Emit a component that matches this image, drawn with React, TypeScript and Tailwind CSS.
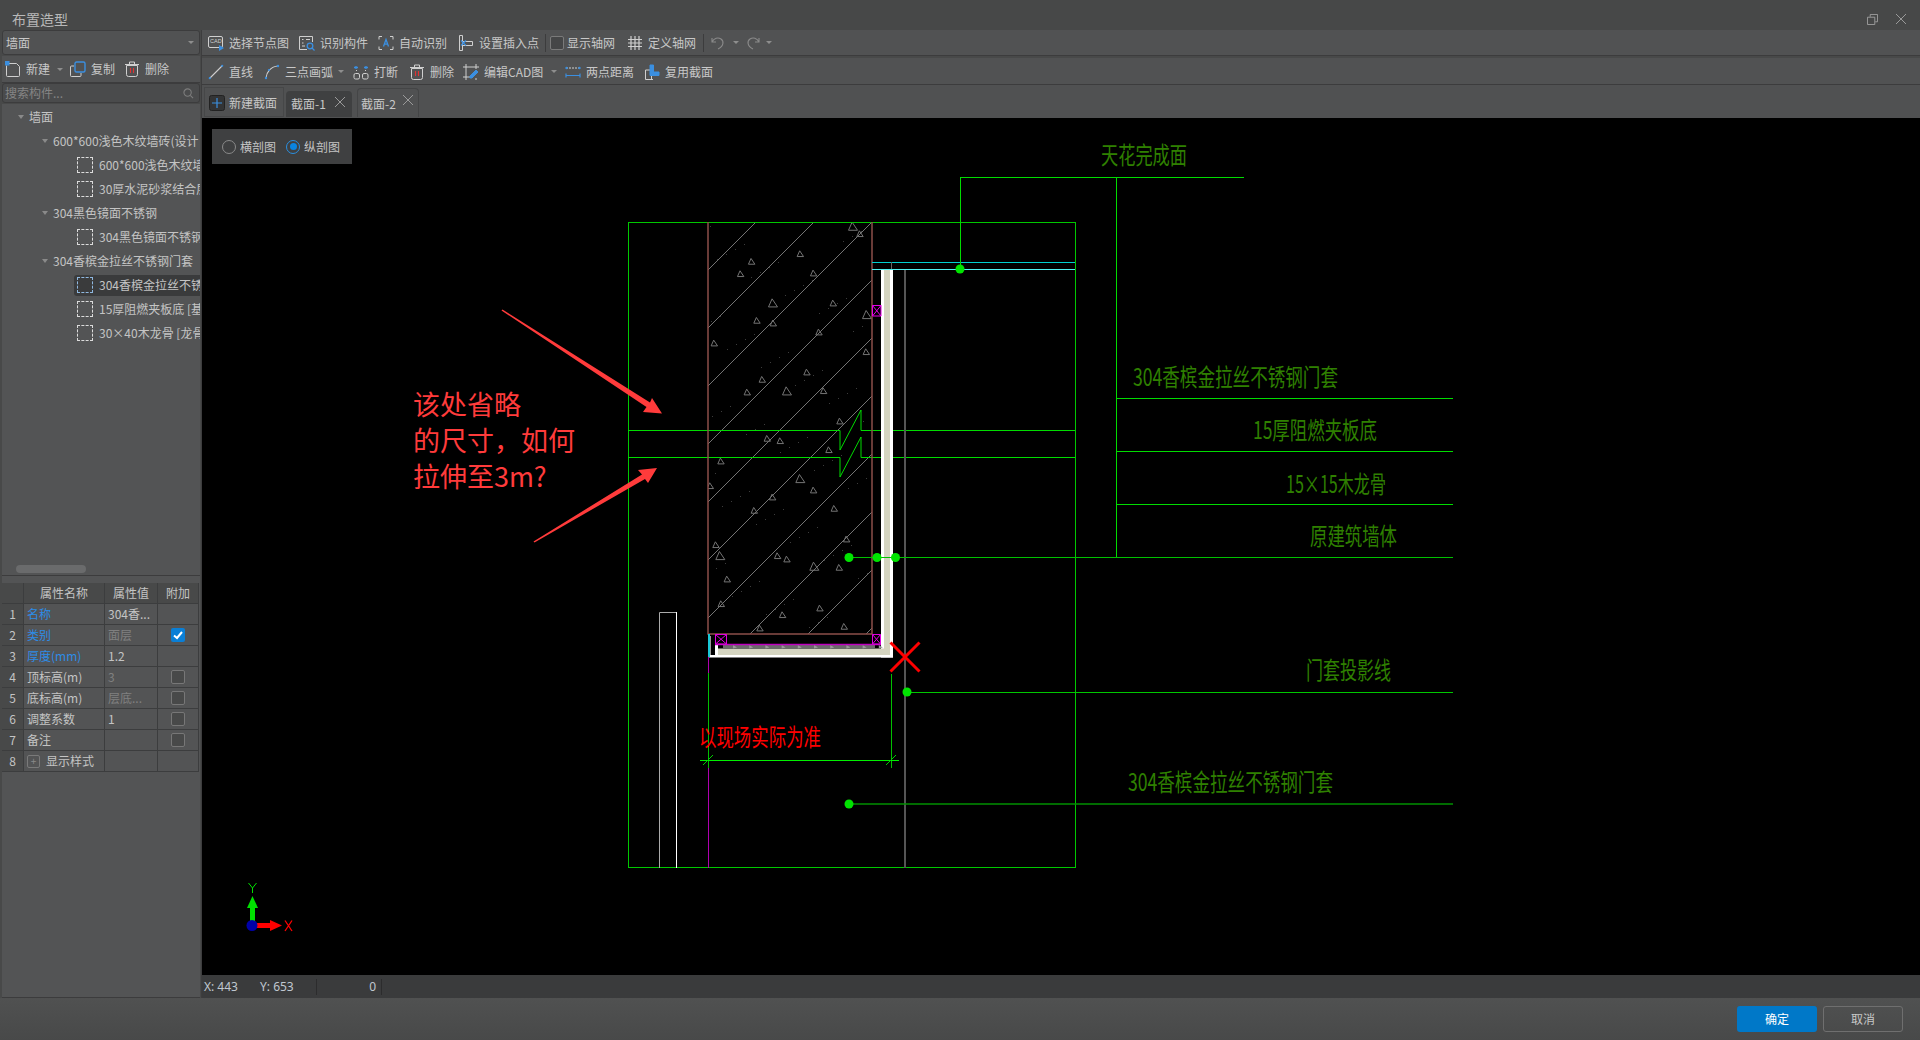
import React from "react";

const FONT = { fontFamily: '"Noto Sans CJK SC", "Noto Sans", sans-serif' };
const LATIN = '"Noto Sans", "Noto Sans CJK SC", sans-serif';

function I({ children, className = "" }: { children: React.ReactNode; className?: string }) {
  return (
    <svg viewBox="0 0 16 16" fill="none" stroke="#cfcfcf" strokeWidth="1" className={"w-4 h-4 shrink-0 " + className}>
      {children}
    </svg>
  );
}
const B = "#3b8fe0";
const IconCad = () => (
  <I>
    <rect x="0.5" y="1.5" width="14" height="11" rx="1.5" />
    <text x="2" y="8" fontSize="5.5" fill="#cfcfcf" stroke="none" fontFamily="Liberation Sans">CAD</text>
    <path d="M11 10l5 3-5 3z" fill={B} stroke="none" />
  </I>
);
const IconRecog = () => (
  <I>
    <path d="M13.5 7V1.5h-13v13H8" />
    <path d="M3 4.5h1.5M7 4.5h4M3 8h1.5M3 11h3" />
    <circle cx="11" cy="11" r="2.8" stroke={B} strokeWidth="1.3" />
    <path d="M13 13l2.5 2.5" stroke={B} strokeWidth="1.3" />
  </I>
);
const IconAuto = () => (
  <I>
    <path d="M1 4.5V1.5h3M12 1.5h3v3M1 11.5v3h3M15 11.5v3h-3" />
    <path d="M5.5 11.5L8 4.5l2.5 7M6.4 9.2h3.2" stroke={B} strokeWidth="1.3" />
  </I>
);
const IconInsert = () => (
  <I>
    <path d="M1.5 0.5h3v15h-3z" />
    <path d="M4.5 6.5h10v4h-10" />
    <path d="M3 5.5l5 5M8 5.5l-5 5" stroke={B} strokeWidth="1.2" />
  </I>
);
const IconGrid = () => (
  <I>
    <path d="M4 1v14M8 1v14M12 1v14M1 4.5h14M1 8h14M1 11.5h14" strokeWidth="1.2" />
  </I>
);
const IconLine = () => (
  <I>
    <path d="M2 14L14 2" strokeWidth="1.1" />
    <circle cx="1.8" cy="14.2" r="1.1" fill={B} stroke="none" />
    <circle cx="14.2" cy="1.8" r="1.1" fill={B} stroke="none" />
  </I>
);
const IconArc = () => (
  <I>
    <path d="M2 14C2.5 8 7 2.5 14 2" strokeWidth="1.1" />
    <circle cx="2" cy="14" r="1.2" fill={B} stroke="none" />
    <circle cx="5" cy="6" r="1.1" fill={B} stroke="none" />
    <circle cx="14" cy="2" r="1.2" fill={B} stroke="none" />
  </I>
);
const IconBreak = () => (
  <I>
    <rect x="1" y="9.5" width="5.5" height="5.5" rx="1.5" />
    <rect x="9.5" y="9.5" width="5.5" height="5.5" rx="1.5" />
    <path d="M1 3.5h4M3 2v3M11 3.5h4M13 2v3" stroke={B} strokeWidth="1.3" />
    <path d="M3.5 7V6M12.5 7V6" />
  </I>
);
const IconTrash = () => (
  <I>
    <path d="M2.5 4.5h11v9a2 2 0 0 1-2 2h-7a2 2 0 0 1-2-2z" />
    <path d="M1 3.5h14M5.5 3V1h5v2" />
    <path d="M6.5 7v5M9.5 7v5" stroke="#e03434" strokeWidth="1.1" />
  </I>
);
const IconEditCad = () => (
  <I>
    <path d="M3 0v16M0 3h16M13 0v5M0 13h8M13 14v2" strokeWidth="1" />
    <path d="M7 12l6-6 2 2-6 6H7z" fill={B} stroke={B} />
  </I>
);
const IconDist = () => (
  <I>
    <path d="M1 4h14" stroke="#cfcfcf" strokeDasharray="2 1" />
    <path d="M1 11.5h14M1 9.5v4M15 9.5v4" stroke={B} strokeWidth="1.2" />
    <circle cx="1.5" cy="4" r="1.2" fill={B} stroke="none" />
    <circle cx="14.5" cy="4" r="1.2" fill={B} stroke="none" />
  </I>
);
const IconReuse = () => (
  <I>
    <path d="M9 15.5H1.5V6h6v9.5" />
    <path d="M6 1h3.5v7H15v3.5H6z" fill={B} stroke={B} />
  </I>
);
const IconNew = () => (
  <I>
    <path d="M3.5 2.5h8l3 3v9a1 1 0 0 1-1 1h-11a1 1 0 0 1-1-1v-10" />
    <rect x="0" y="0" width="4.5" height="4.5" fill={B} stroke="none" />
  </I>
);
const IconCopy = () => (
  <I>
    <path d="M4 5H1.5a1 1 0 0 0-1 1v8.5a1 1 0 0 0 1 1H10a1 1 0 0 0 1-1V12" />
    <rect x="5" y="1" width="10" height="10" rx="1.5" stroke={B} strokeWidth="1.4" />
  </I>
);
const IconTabAdd = () => (
  <svg viewBox="0 0 16 16" fill="none" className="w-4 h-4 shrink-0">
    <rect x="0.5" y="0.5" width="15" height="15" rx="2" fill="#333435" stroke="#222" />
    <path d="M8 3v10M3 8h10" stroke={B} strokeWidth="1.2" />
  </svg>
);

function Caret({ className = "" }: { className?: string }) {
  return <span className={"w-0 h-0 shrink-0 border-x-[3px] border-x-transparent border-t-[3px] border-t-[#8e8e8e] " + className} />;
}

function Tool({ icon, label, className = "" }: { icon: React.ReactNode; label: string; className?: string }) {
  return (
    <div className={"flex items-center shrink-0 text-[12px] text-[#c8c8c8] " + className}>
      {icon}
      <span className="ml-[5px] whitespace-nowrap">{label}</span>
    </div>
  );
}

function Row({ indent, arrow, icon, text, sel }: { indent: string; arrow?: boolean; icon?: boolean; text: string; sel?: boolean }) {
  return (
    <div className={"h-6 flex items-center whitespace-nowrap overflow-hidden " + indent}>
      {arrow && <span className="w-0 h-0 mr-[5px] border-x-[3.5px] border-x-transparent border-t-[4px] border-t-[#8a8a8a]" />}
      {icon ? (
        <div className={"flex items-center flex-1 h-[21px] pl-[3px] rounded-l-[3px] overflow-hidden " + (sel ? "bg-[#3a3b3c]" : "")}>
          <span className={"w-4 h-4 shrink-0 border border-dashed mr-[6px] " + (sel ? "border-[#8fb8e0]" : "border-[#dcdcdc]")} />
          <span className="text-[12px] text-[#c4c4c4]">{text}</span>
        </div>
      ) : (
        <span className="text-[12px] text-[#c4c4c4]">{text}</span>
      )}
    </div>
  );
}

const tree = [
  { indent: "pl-[16px]", arrow: true, text: "墙面" },
  { indent: "pl-[40px]", arrow: true, text: "600*600浅色木纹墙砖(设计" },
  { indent: "pl-[72px]", icon: true, text: "600*600浅色木纹墙砖" },
  { indent: "pl-[72px]", icon: true, text: "30厚水泥砂浆结合层" },
  { indent: "pl-[40px]", arrow: true, text: "304黑色镜面不锈钢" },
  { indent: "pl-[72px]", icon: true, text: "304黑色镜面不锈钢板" },
  { indent: "pl-[40px]", arrow: true, text: "304香槟金拉丝不锈钢门套" },
  { indent: "pl-[72px]", icon: true, text: "304香槟金拉丝不锈钢板", sel: true },
  { indent: "pl-[72px]", icon: true, text: "15厚阻燃夹板底 [基层]" },
  { indent: "pl-[72px]", icon: true, text: "30×40木龙骨 [龙骨]" },
];

function Check({ on }: { on?: boolean }) {
  return on ? (
    <span className="w-[14px] h-[14px] rounded-[2px] bg-[#0a7fd6] flex items-center justify-center">
      <svg viewBox="0 0 12 12" className="w-3 h-3" fill="none" stroke="#fff" strokeWidth="2"><path d="M2 6.5l3 2.5 5-6" /></svg>
    </span>
  ) : (
    <span className="w-[14px] h-[14px] rounded-[2px] border border-[#777] bg-[#484949]" />
  );
}

const props: { n: number; name: string; blue?: boolean; val: string; dim?: boolean; chk?: "on" | "off"; plus?: boolean }[] = [
  { n: 1, name: "名称", blue: true, val: "304香..." },
  { n: 2, name: "类别", blue: true, val: "面层", dim: true, chk: "on" },
  { n: 3, name: "厚度(mm)", blue: true, val: "1.2" },
  { n: 4, name: "顶标高(m)", val: "3", dim: true, chk: "off" },
  { n: 5, name: "底标高(m)", val: "层底...", dim: true, chk: "off" },
  { n: 6, name: "调整系数", val: "1", chk: "off" },
  { n: 7, name: "备注", val: "", chk: "off" },
  { n: 8, name: "显示样式", val: "", plus: true },
];

function PropTable() {
  const cell = "border-r border-b border-[#3c3d3e] flex items-center h-[21px] text-[12px]";
  return (
    <div className="grid grid-cols-[22px_81px_53px_41px] w-[197px] mt-[7px]">
      <div className={cell + " bg-[#484949]"} />
      <div className={cell + " bg-[#484949] justify-center text-[#c4c4c4]"}>属性名称</div>
      <div className={cell + " bg-[#484949] justify-center text-[#c4c4c4]"}>属性值</div>
      <div className={cell + " bg-[#484949] justify-center text-[#c4c4c4]"}>附加</div>
      {props.map((p) => (
        <React.Fragment key={p.n}>
          <div className={cell + " bg-[#484949] justify-center text-[#c4c4c4]"}>{p.n}</div>
          <div className={cell + " pl-[3px] " + (p.blue ? "text-[#2d8ce6]" : "text-[#c4c4c4]")}>
            {p.plus && (
              <span className="w-[13px] h-[13px] mr-[6px] rounded-[2px] border border-[#7a7a7a] flex items-center justify-center text-[10px] leading-none text-[#8a8a8a]">+</span>
            )}
            {p.name}
          </div>
          <div className={cell + " pl-[3px] " + (p.dim ? "text-[#808080]" : "text-[#c4c4c4]")}>{p.val}</div>
          <div className={cell + " justify-center"}>{p.chk && <Check on={p.chk === "on"} />}</div>
        </React.Fragment>
      ))}
    </div>
  );
}

const tris: [number, number, number][] = [
  ...([
    [699, 50, 1], [720, 72, 0], [541, 132, 0], [395, 155, 0], [362, 192, 0], [581, 190, 0], [459, 280, 1], [640, 280, 0], [741, 315, 1],
    [411, 332, 0], [460, 340, 0], [597, 367, 0], [283, 400, 0], [739, 426, 0], [561, 487, 0], [427, 509, 0], [382, 547, 0], [501, 544, 1],
    [611, 543, 0], [660, 634, 0], [442, 686, 0], [481, 693, 0], [627, 720, 0], [303, 754, 0], [271, 828, 0], [541, 807, 1], [581, 841, 0], [458, 862, 0],
  ] as number[][]).map((t) => [620 + t[0] / 3, 210 + t[1] / 3, t[2]] as [number, number, number]),
  ...([
    [403, 32, 0], [643, 26, 0], [680, 118, 0], [288, 135, 0], [301, 168, 1], [473, 168, 0], [501, 178, 0], [658, 203, 0], [583, 200, 1],
    [322, 238, 0], [304, 312, 0], [600, 325, 0], [488, 345, 0], [420, 385, 0], [673, 380, 0],
  ] as number[][]).map((t) => [620 + t[0] / 3, 500 + t[1] / 3, t[2]] as [number, number, number]),
];

const specks: [number, number][] = Array.from({ length: 90 }, (_, i) => [
  710 + ((i * 97) % 160),
  226 + ((i * 211) % 404),
]);

const GREEN_TXT = "#2f8000";
function Label({ x, y, w, children }: { x: number; y: number; w: number; children: string }) {
  return (
    <text x={x} y={y} fontSize="24" fill={GREEN_TXT} textLength={w} lengthAdjust="spacingAndGlyphs" style={FONT}>
      {children}
    </text>
  );
}

function Drawing() {
  const hatch = Array.from({ length: 10 }, (_, k) => 978 + 58 * k);
  return (
    <svg viewBox="202 118 1718 857" className="block w-full h-full" fill="none">
      <defs>
        <clipPath id="wall"><rect x="708" y="222" width="164" height="412" /></clipPath>
      </defs>
      {/* hatch */}
      <g clipPath="url(#wall)" stroke="#747474" strokeWidth="1">
        {hatch.map((c) => (
          <line key={c} x1="708" y1={c - 708} x2="872" y2={c - 872} />
        ))}
        {tris.map((t, i) => {
          const s = t[2] ? 4.5 : 3.2;
          return <path key={i} d={`M${t[0] - s * 0.2} ${t[1] - s} L${t[0] + s} ${t[1] + s * 0.8} L${t[0] - s} ${t[1] + s * 0.8} Z`} />;
        })}
      </g>
      <g fill="#3c3c3c">
        {specks.map((p, i) => (
          <rect key={i} x={p[0]} y={p[1]} width="1" height="1" />
        ))}
      </g>
      {/* frame */}
      <rect x="628.5" y="222.5" width="447" height="645" stroke="#00c800" />
      <path d="M628 430.5H840V450L861 410V430.5H1075M628 457.5H840V477L861 437V457.5H1075" stroke="#00dc00" />
      {/* wall */}
      <path d="M708 222V634H872V222" stroke="#8c4f49" strokeWidth="1.5" />
      {/* grey lines */}
      <line x1="905" y1="270" x2="905" y2="868" stroke="#555" strokeWidth="2" />
      <path d="M659.5 868V612.5H676" stroke="#aaa" />
      <path d="M676.5 612V868" stroke="#fff" />
      {/* cyan */}
      <line x1="872" y1="262.5" x2="1075" y2="262.5" stroke="#00d0d0" />
      <line x1="872" y1="269.5" x2="1075" y2="269.5" stroke="#50f0f0" />
      <line x1="891.5" y1="262" x2="891.5" y2="269" stroke="#666" />
      {/* door casing */}
      <rect x="881" y="270" width="12" height="387.5" fill="#fff" />
      <rect x="884" y="270" width="6" height="385" fill="#d4d4c0" />
      <rect x="708" y="655" width="185" height="2.5" fill="#fff" />
      <rect x="715" y="644" width="3" height="11" fill="#fff" />
      <rect x="718" y="648.5" width="166" height="6.5" fill="#d4d4c0" />
      <rect x="723" y="645" width="152" height="4" fill="#6a6a6a" />
      <g fill="#999">
        {Array.from({ length: 10 }, (_, i) => (
          <path key={i} d={`M${733 + i * 16.2} 645l4 2.5-4 1z`} />
        ))}
      </g>
      <rect x="708" y="634" width="2" height="23" fill="#19c8d8" />
      <line x1="710.5" y1="636" x2="710.5" y2="655" stroke="#999" />
      {/* purple */}
      <path d="M715 644.5H881" stroke="#c000c0" strokeWidth="1.5" />
      <path d="M715.5 634.5h11v9.5h-11zM715.5 634.5l11 9.5M726.5 634.5l-11 9.5" stroke="#e000e0" />
      <path d="M872.5 634.5h8v9.5h-8zM872.5 634.5l8 9.5M880.5 634.5l-8 9.5" stroke="#e000e0" />
      <path d="M872.5 305.5h8.5v10.5h-8.5zM872.5 305.5l8.5 10.5M881 305.5l-8.5 10.5" stroke="#e800e8" />
      <line x1="708.5" y1="657" x2="708.5" y2="868" stroke="#b000b0" />
      {/* dimension */}
      <line x1="708.5" y1="673" x2="708.5" y2="768" stroke="#00c000" />
      <line x1="891.5" y1="674" x2="891.5" y2="768" stroke="#00c000" />
      <path d="M700 760.5H899" stroke="#00f000" />
      <path d="M703 765l10-10M886 765l10-10" stroke="#00d000" />
      <text x="699" y="746" fontSize="24" fill="#f00" textLength="122" lengthAdjust="spacingAndGlyphs" style={FONT}>以现场实际为准</text>
      {/* red X */}
      <path d="M890.5 642.5l29 29M919.5 642.5l-29 29" stroke="#f00" strokeWidth="3" />
      {/* leaders */}
      <path d="M960.5 177V269M960 177.5H1244M1116.5 177V557M1116 398.5H1453M1116 451.5H1453M1116 504.5H1453" stroke="#00dc00" />
      <path d="M849 557.5H1453" stroke="#00c000" />
      <path d="M907 692.5H1453" stroke="#00c800" />
      <path d="M849 804H1453" stroke="#009000" strokeWidth="1.5" />
      <g fill="#00e400">
        <circle cx="960" cy="269" r="4.5" />
        <circle cx="849" cy="557.5" r="4.5" />
        <circle cx="877" cy="557.5" r="4.5" />
        <circle cx="895.5" cy="557.5" r="4.5" />
        <circle cx="907" cy="692" r="4.5" />
        <circle cx="849" cy="804" r="4.5" />
      </g>
      <Label x={1101} y={164} w={86}>天花完成面</Label>
      <Label x={1133} y={386} w={205}>304香槟金拉丝不锈钢门套</Label>
      <Label x={1253} y={439} w={124}>15厚阻燃夹板底</Label>
      <Label x={1286} y={493} w={100}>15×15木龙骨</Label>
      <Label x={1310} y={545} w={87}>原建筑墙体</Label>
      <Label x={1306} y={679} w={85}>门套投影线</Label>
      <Label x={1128} y={791} w={205}>304香槟金拉丝不锈钢门套</Label>
      {/* annotation */}
      <g fill="#ff3b3b">
        <path d="M501.5 310.5L502.5 309.5L650 402.5L652 398L662 413.5L643 412L646.5 407Z" />
        <path d="M533.5 541.5L534.5 542.5L645 479L648 483L657 468L638 470L642 474.5Z" />
      </g>
      <g fill="#ff3b3b" fontSize="27" style={FONT}>
        <text x="413" y="415">该处省略</text>
        <text x="413" y="451">的尺寸，如何</text>
        <text x="413" y="487">拉伸至3m?</text>
      </g>
      {/* axes */}
      <rect x="250" y="908" width="5" height="17" fill="#00e000" />
      <path d="M252.5 896L258 908H247Z" fill="#00e000" />
      <rect x="257" y="923" width="14" height="5" fill="#f00" />
      <path d="M270 920L282 925.5L270 931Z" fill="#f00" />
      <circle cx="252" cy="925.5" r="5.5" fill="#0000a8" />
      <path d="M248.5 883L252.5 888V893M256.5 883L252.5 888" stroke="#00e000" />
      <path d="M285 920.5L292 931M292 920.5L285 931" stroke="#f00" strokeWidth="1.3" />
    </svg>
  );
}

function Radio({ on, label }: { on?: boolean; label: string }) {
  return (
    <div className="flex items-center text-[12px] text-[#c4c4c4]">
      <span className={"w-[14px] h-[14px] rounded-full border flex items-center justify-center mr-[4px] " + (on ? "border-[#2a8fe0]" : "border-[#8a8a8a]")}>
        {on && <span className="w-[7px] h-[7px] rounded-full bg-[#0a84e0]" />}
      </span>
      {label}
    </div>
  );
}

function CloseX({ className = "" }: { className?: string }) {
  return (
    <svg viewBox="0 0 10 10" className={"w-[10px] h-[10px] " + className} fill="none" stroke="#9a9a9a"><path d="M0 0l10 10M10 0L0 10" /></svg>
  );
}

export default function App() {
  return (
    <div className="w-[1920px] h-[1040px] flex flex-col overflow-hidden bg-[#484949] text-[12px]" style={{ ...FONT }}>
      {/* title */}
      <div className="h-[30px] shrink-0 flex items-center pl-[12px] pr-[14px] pt-[8px] bg-[#474848]">
        <span className="text-[14px] text-[#b8b8b8] flex-1">布置造型</span>
        <svg viewBox="0 0 12 12" className="w-[11px] h-[11px] mr-[18px]" fill="none" stroke="#a0a0a0"><path d="M3.5 3V.5h8v8H9M.5 3.5h8v8h-8z" /></svg>
        <CloseX />
      </div>
      <div className="flex-1 flex min-h-0">
        {/* left */}
        <div className="w-[202px] shrink-0 flex flex-col pl-[2px] pr-[1px] border-r border-[#3d3d3e]">
          <div className="h-[25px] shrink-0 flex items-center px-[3px] rounded-[3px] border border-[#3c3c3d] bg-[#515253] text-[12px] text-[#c8c8c8] justify-between">
            墙面
            <Caret className="mr-[2px]" />
          </div>
          <div className="h-[27px] shrink-0 mt-[1px] flex items-center pl-[3px] bg-[#515253] border-b border-[#3c3c3d]">
            <Tool icon={<IconNew />} label="新建" className="w-[52px]" />
            <Caret className="mr-[7px]" />
            <Tool icon={<IconCopy />} label="复制" className="w-[54px]" />
            <Tool icon={<IconTrash />} label="删除" />
          </div>
          <div className="h-[20px] shrink-0 flex items-center justify-between px-[2px] rounded-[3px] border border-[#3c3c3d] bg-[#4a4b4c] text-[12px] text-[#858585]">
            搜索构件...
            <svg viewBox="0 0 12 12" className="w-[11px] h-[11px] mr-[3px]" fill="none" stroke="#7d7d7d" strokeWidth="1.2"><circle cx="5" cy="5" r="4" /><path d="M8 8l3 3" /></svg>
          </div>
          <div className="h-[472px] shrink-0 mt-[1px] bg-[#535455] border-b border-[#3c3c3d] flex flex-col pt-[1px]">
            {tree.map((t, i) => (
              <Row key={i} {...t} />
            ))}
            <div className="mt-auto mb-[2px] ml-[14px] w-[70px] h-[8px] rounded-full bg-[#6a6b6c]" />
          </div>
          <div className="flex-1 bg-[#535455] min-h-0 border-b border-[#3c3c3d]">
            <PropTable />
          </div>
        </div>
        {/* right */}
        <div className="flex-1 flex flex-col min-w-0">
          <div className="h-[26px] shrink-0 flex items-center pl-[6px] bg-[#515253] border-b border-[#3c3c3d]">
            <Tool icon={<IconCad />} label="选择节点图" className="w-[91px]" />
            <Tool icon={<IconRecog />} label="识别构件" className="w-[79px]" />
            <Tool icon={<IconAuto />} label="自动识别" className="w-[80px]" />
            <Tool icon={<IconInsert />} label="设置插入点" className="w-[87px]" />
            <span className="w-px h-[18px] bg-[#3c3c3d] mr-[4px]" />
            <span className="w-[14px] h-[14px] rounded-[2px] border border-[#7a7a7a] bg-[#454647] mr-[3px]" />
            <span className="text-[12px] text-[#c8c8c8] w-[60px]">显示轴网</span>
            <Tool icon={<IconGrid />} label="定义轴网" className="w-[76px]" />
            <span className="w-px h-[18px] bg-[#3c3c3d] mr-[7px]" />
            <svg viewBox="0 0 14 14" className="w-[14px] h-[14px] mr-[8px]" fill="none" stroke="#8a8a8a" strokeWidth="1.1"><path d="M1 2v4h4M1 6c2-4 6-5 9-3 3 2 3 7-3 10" /></svg>
            <Caret className="mr-[7px]" />
            <svg viewBox="0 0 14 14" className="w-[14px] h-[14px] mr-[6px]" fill="none" stroke="#8a8a8a" strokeWidth="1.1"><path d="M13 2v4H9M13 6C11 2 7 1 4 3 1 5 1 10 7 13" /></svg>
            <Caret />
          </div>
          <div className="h-[27px] mt-[2px] pt-[1px] shrink-0 flex items-center pl-[6px] bg-[#515253] border-b border-[#3c3c3d]">
            <Tool icon={<IconLine />} label="直线" className="w-[56px]" />
            <Tool icon={<IconArc />} label="三点画弧" className="w-[74px]" />
            <Caret className="mr-[9px]" />
            <Tool icon={<IconBreak />} label="打断" className="w-[56px]" />
            <Tool icon={<IconTrash />} label="删除" className="w-[54px]" />
            <Tool icon={<IconEditCad />} label="编辑CAD图" className="w-[88px]" />
            <Caret className="mr-[8px]" />
            <Tool icon={<IconDist />} label="两点距离" className="w-[79px]" />
            <Tool icon={<IconReuse />} label="复用截面" />
          </div>
          {/* tabs */}
          <div className="h-[33px] shrink-0 flex items-end pl-[2px] bg-[#505152]">
            <div className="w-[80px] h-[30px] mb-[1px] flex items-center pl-[4px] pt-[2px] gap-[4px] border border-[#464748] text-[12px] text-[#c8c8c8]">
              <IconTabAdd />
              新建截面
            </div>
            <div className="w-[66px] h-[26px] mb-[1px] ml-[2px] flex items-center justify-between pl-[5px] pr-[7px] rounded-t-[4px] bg-[#3f4041] text-[12px] text-[#c8c8c8]">
              截面-1
              <CloseX className="mb-[5px]" />
            </div>
            <div className="w-[62px] h-[29px] mb-[1px] ml-[5px] flex items-center justify-between pl-[3px] pr-[5px] pt-[1px] rounded-t-[4px] border border-b-0 border-[#444546] text-[12px] text-[#c8c8c8]">
              截面-2
              <CloseX className="mb-[7px]" />
            </div>
          </div>
          {/* canvas */}
          <div className="flex-1 bg-black relative min-h-0">
            <Drawing />
            <div className="absolute left-[10px] top-[11px] w-[140px] h-[35px] bg-[#3f4041] flex items-center pl-[10px] gap-[10px]">
              <Radio label="横剖图" />
              <Radio on label="纵剖图" />
            </div>
          </div>
          {/* status */}
          <div className="h-[23px] shrink-0 bg-[#3a3b3c] flex items-center text-[12px] text-[#c0c8d0]" style={{ fontFamily: LATIN }}>
            <span className="ml-[2px] w-[56px]">X: 443</span>
            <span className="w-[56px]">Y: 653</span>
            <span className="w-px h-[16px] bg-[#2c2c2d]" />
            <span className="w-[64px] text-right pr-[5px]">0</span>
            <span className="w-px h-[16px] bg-[#2c2c2d]" />
          </div>
        </div>
      </div>
      {/* footer */}
      <div className="h-[42px] shrink-0 flex items-center justify-end pr-[17px] gap-[6px] bg-gradient-to-b from-[#505151] to-[#484949]">
        <button className="w-[80px] h-[26px] rounded-[3px] bg-[#0078c8] text-[12px] text-white">确定</button>
        <button className="w-[80px] h-[26px] rounded-[3px] border border-[#6f6f6f] text-[12px] text-[#c8c8c8]">取消</button>
      </div>
    </div>
  );
}
